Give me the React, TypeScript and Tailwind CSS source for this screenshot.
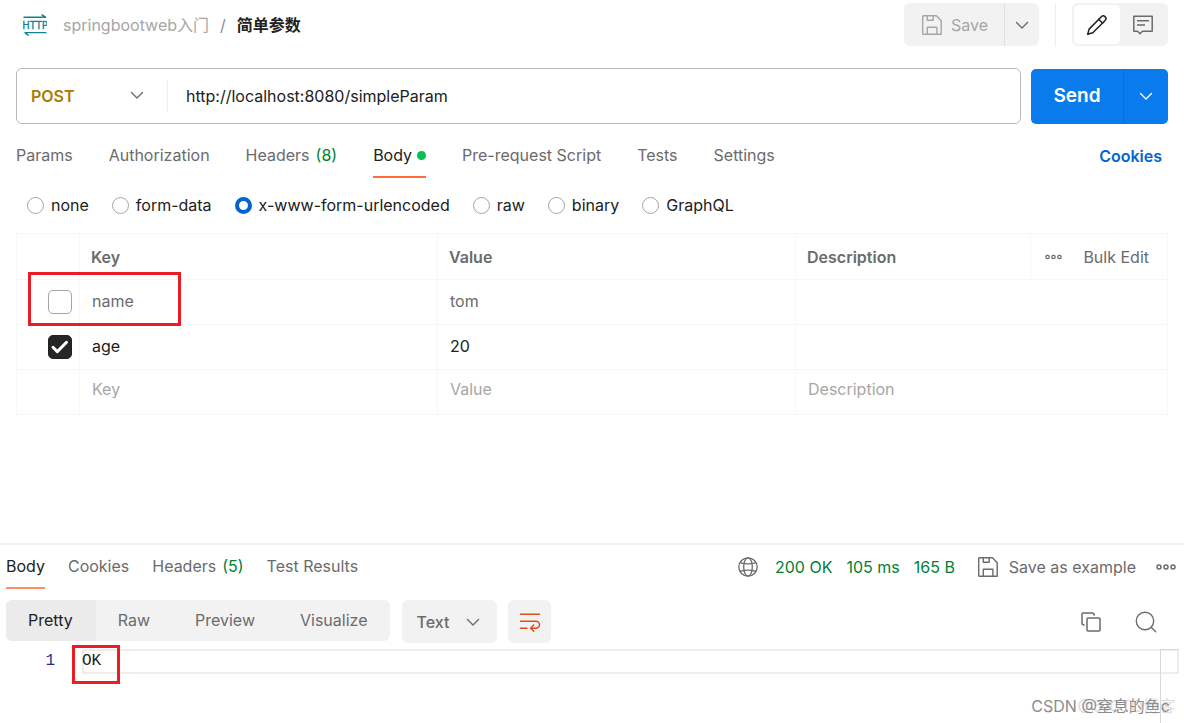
import { useState } from "react";
import type { ReactNode } from "react";

function Chevron({ className }: { className?: string }) {
  return (
    <svg width="14" height="14" viewBox="0 0 14 14" fill="none" stroke="currentColor" strokeWidth="1.4" strokeLinecap="round" strokeLinejoin="round" className={className} aria-hidden="true">
      <path d="M1.5 4.5 7 10l5.5-5.5" />
    </svg>
  );
}

function SaveIcon() {
  return (
    <svg width="20" height="20" viewBox="0 0 20 20" fill="none" stroke="currentColor" strokeWidth="1.4" strokeLinejoin="round" aria-hidden="true">
      <path d="M1.2.8h13.3l4.7 5v13.4h-18a.5.5 0 0 1-.5-.5V1.3a.5.5 0 0 1 .5-.5Z" />
      <path d="M5.3.8V5.3h5.900V.8M5.300 19.200v-7h9.600v7" />
    </svg>
  );
}

function HttpIcon() {
  return (
    <svg width="24" height="22" viewBox="0 0 24 22" aria-hidden="true" className="shrink-0">
      <g fill="none" stroke="#0e8394" strokeWidth="1.4" strokeLinecap="round" strokeLinejoin="round">
        <path d="M1 3.200h21.500L19 .8" />
        <path d="M23 18.600H2l3.200 2.600" />
      </g>
      <text x="12" y="15.300" textAnchor="middle" fill="#0e8394" stroke="#0e8394" strokeWidth=".3" fontSize="11" fontFamily="'Liberation Sans Narrow', 'DejaVu Sans Condensed', sans-serif">
        HTTP
      </text>
    </svg>
  );
}

function DotsIcon({ size, className }: { size: "small" | "large"; className?: string }) {
  return (
    <svg width={size === "small" ? 17 : 20} height="6" viewBox="0 0 20 6" fill="none" stroke="currentColor" strokeWidth="1.500" aria-hidden="true" className={className}>
      <circle cx="3" cy="3" r="2" />
      <circle cx="10" cy="3" r="2" />
      <circle cx="17" cy="3" r="2" />
    </svg>
  );
}

function Tab({ children, active = false, underline = "border-[#ff6c37]" }: { children: ReactNode; active?: boolean; underline?: string }) {
  return (
    <button
      type="button"
      role="tab"
      aria-selected={active}
      className={`flex h-11 items-center border-b-2 whitespace-nowrap ${active ? `${underline} text-[#212121]` : "border-transparent text-[#6b6b6b]"}`}
    >
      {children}
    </button>
  );
}

const bodyTypes = ["none", "form-data", "x-www-form-urlencoded", "raw", "binary", "GraphQL"];

const params = [
  { key: "name", value: "tom", enabled: false },
  { key: "age", value: "20", enabled: true },
];

const cell = "border border-[#f7f7f7]";
const field = "block h-11 w-full bg-transparent px-3 pb-[3px] outline-none placeholder:text-[#a6a6a6]";

function ParamRow({ name, value, initial }: { name: string; value: string; initial: boolean }) {
  const [on, setOn] = useState(initial);
  const color = on ? "text-[#212121]" : "text-[#6b6b6b]";
  return (
    <tr>
      <td className={cell}>
        <div className="relative ml-[31px] size-6">
          <input
            type="checkbox"
            aria-label={`Enable ${name}`}
            checked={on}
            onChange={() => setOn(!on)}
            className="block size-6 appearance-none rounded-[5px] border border-[#a6a6a6] checked:border-[#212121] checked:bg-[#262626]"
          />
          {on && (
            <svg width="24" height="24" viewBox="0 0 24 24" fill="none" stroke="#fff" strokeWidth="3" strokeLinecap="round" strokeLinejoin="round" aria-hidden="true" className="pointer-events-none absolute inset-0">
              <path d="m5 12.300 4.300 4.300L18.500 7.300" />
            </svg>
          )}
        </div>
      </td>
      <td className={cell}>
        <input aria-label="Key" defaultValue={name} className={`${field} ${color}`} />
      </td>
      <td className={cell}>
        <input aria-label="Value" defaultValue={value} className={`${field} ${color}`} />
      </td>
      <td className={cell} colSpan={2}>
        <input aria-label="Description" className={`${field} ${color}`} />
      </td>
    </tr>
  );
}

function Header() {
  return (
    <header className="flex items-start justify-between pt-[3px]">
      <nav aria-label="Breadcrumb" className="flex h-[43px] items-center pl-[7px]">
        <HttpIcon />
        <a href="#collection" className="ml-4 text-[#a6a6a6]">springbootweb入门</a>
        <span className="mx-[11px] text-[#8a8a8a]">/</span>
        <span className="font-bold text-[#212121]">简单参数</span>
      </nav>
      <div className="flex items-center">
        <div className="flex h-[43px] overflow-hidden rounded-md bg-[#f2f2f2]">
          <button type="button" className="flex items-center gap-[9px] border-r border-[#e0e0e0] pr-4 pl-[18px] text-[#a6a6a6]">
            <SaveIcon />
            Save
          </button>
          <button type="button" aria-label="Save options" className="grid w-[34px] place-items-center text-[#6b6b6b]">
            <Chevron />
          </button>
        </div>
        <div className="mx-4 h-[43px] w-px bg-[#ededed]" />
        <div className="flex h-[43px] w-24 rounded-md bg-[#f2f2f2] p-[2px]">
          <button type="button" aria-label="Edit" className="grid flex-1 place-items-center rounded-[5px] bg-white text-[#212121]">
            <svg width="22" height="22" viewBox="0 0 22 22" fill="none" stroke="currentColor" strokeWidth="1.500" strokeLinejoin="round" strokeLinecap="round" aria-hidden="true">
              <path d="m1.700 20.300 1.400-5.200L15.300 2.700a2.600 2.600 0 0 1 3.800 3.700L6.800 18.800l-5.100 1.500Z" />
              <path d="m12.700 5.300 3.900 3.900" />
            </svg>
          </button>
          <button type="button" aria-label="Comments" className="grid flex-1 place-items-center text-[#6b6b6b]">
            <svg width="20" height="20" viewBox="0 0 20 20" fill="none" stroke="currentColor" strokeWidth="1.500" strokeLinejoin="round" aria-hidden="true">
              <path d="M.8 1.200h18.400v15H9.500L7 18.700l-2.500-2.500H.8v-15Z" />
              <path d="M4 5.700h12M4 10h8" />
            </svg>
          </button>
        </div>
      </div>
    </header>
  );
}

function UrlBar() {
  return (
    <div className="mt-[22px] flex h-[56px] items-center gap-[10px]">
      <div className="flex h-full min-w-0 flex-1 items-center rounded-md border border-[#b8b8b8]">
        <div className="relative w-[151px] border-r border-[#ededed]">
          <select aria-label="Method" defaultValue="POST" className="h-8 w-full appearance-none bg-transparent pl-[14px] font-semibold text-[#ad7a03] outline-none">
            <option>GET</option>
            <option>POST</option>
            <option>PUT</option>
          </select>
          <Chevron className="pointer-events-none absolute top-2 right-[23px] text-[#6b6b6b]" />
        </div>
        <input aria-label="Request URL" defaultValue="http://localhost:8080/simpleParam" className="min-w-0 flex-1 px-[18px] text-[#212121] outline-none" />
      </div>
      <div className="flex h-[55px] w-[137px] overflow-hidden rounded-[5px] bg-[#097bed] text-white">
        <button type="button" className="flex-1 border-r border-[#0a6fd6] text-[19px] font-semibold">Send</button>
        <button type="button" aria-label="Send options" className="grid w-11 place-items-center">
          <Chevron />
        </button>
      </div>
    </div>
  );
}

function BodyTypes() {
  return (
    <fieldset aria-label="Body type" className="mt-[15px] flex flex-wrap gap-x-[23px] pl-[11px]">
      {bodyTypes.map((type) => (
        <label key={type} className="flex h-6 items-center gap-[7px]">
          <input
            type="radio"
            name="body-type"
            defaultChecked={type === "x-www-form-urlencoded"}
            className="size-[17px] appearance-none rounded-full border border-[#a6a6a6] checked:border-4 checked:border-[#0265d2]"
          />
          {type}
        </label>
      ))}
    </fieldset>
  );
}

function ParamsTable() {
  return (
    <div className="relative mt-4">
      <table className="w-full table-fixed border-collapse border border-[#f0f0f0] text-left">
        <colgroup>
          <col className="w-[63px]" />
          <col />
          <col />
          <col className="w-[235px]" />
          <col className="w-[137px]" />
        </colgroup>
        <thead>
          <tr className="h-[46px] text-[#6b6b6b]">
            <th className={cell} aria-label="Enabled" />
            <th className={`${cell} px-[11px] font-semibold`}>Key</th>
            <th className={`${cell} px-[11px] font-semibold`}>Value</th>
            <th className={`${cell} px-[11px] font-semibold`}>Description</th>
            <th className={`${cell} font-normal`}>
              <div className="flex items-center justify-between pr-[18px] pl-[14px]">
                <button type="button" aria-label="More options"><DotsIcon size="small" /></button>
                <button type="button">Bulk Edit</button>
              </div>
            </th>
          </tr>
        </thead>
        <tbody>
          {params.map((p) => (
            <ParamRow key={p.key} name={p.key} value={p.value} initial={p.enabled} />
          ))}
          <tr className="[&_input]:pb-[6px]">
            <td className={cell} />
            <td className={cell}><input aria-label="New key" placeholder="Key" className={field} /></td>
            <td className={cell}><input aria-label="New value" placeholder="Value" className={field} /></td>
            <td className={cell} colSpan={2}><input aria-label="New description" placeholder="Description" className={field} /></td>
          </tr>
        </tbody>
      </table>
      <div className="pointer-events-none absolute top-[39px] left-3 h-[54px] w-[153px] border-[3px] border-[#ec1c24]" />
    </div>
  );
}

function ResponsePanel() {
  return (
    <section aria-label="Response" className="relative mt-32 flex flex-1 flex-col border-t-2 border-[#f2f2f2]">
      <div className="flex items-center justify-between pr-2 pl-[6px]">
        <div role="tablist" className="flex gap-[23px]">
          <Tab active underline="border-[#ff8e62]">Body</Tab>
          <Tab>Cookies</Tab>
          <Tab>Headers <span className="ml-[6px] text-[#007f31]">(5)</span></Tab>
          <Tab>Test Results</Tab>
        </div>
        <div className="flex items-center text-[#6b6b6b]">
          <svg width="20" height="20" viewBox="0 0 20 20" fill="none" stroke="currentColor" strokeWidth="1.300" aria-hidden="true">
            <circle cx="10" cy="10" r="9.200" />
            <ellipse cx="10" cy="10" rx="4.300" ry="9.200" />
            <path d="M2 5.600c4.500 1.500 11.500 1.500 16 0M2 14.400c4.500-1.500 11.500-1.500 16 0" />
          </svg>
          <div className="ml-[17px] flex gap-[14px] text-[#007f31]">
            <span>200 OK</span>
            <span>105 ms</span>
            <span>165 B</span>
          </div>
          <button type="button" className="ml-[23px] flex items-center gap-[11px]">
            <SaveIcon />
            Save as example
          </button>
          <button type="button" aria-label="More actions" className="ml-5"><DotsIcon size="large" /></button>
        </div>
      </div>

      <div className="mt-[11px] flex items-start pl-[6px]">
        <div className="flex h-[41px] overflow-hidden rounded-md bg-[#f2f2f2] text-[#6b6b6b]">
          <button type="button" className="bg-[#ebebeb] pr-[23px] pb-[2px] pl-[22px] text-[#212121]">Pretty</button>
          <button type="button" className="pr-[23px] pb-[2px] pl-[22px]">Raw</button>
          <button type="button" className="pr-[23px] pb-[2px] pl-[22px]">Preview</button>
          <button type="button" className="pr-[23px] pb-[2px] pl-[22px]">Visualize</button>
        </div>
        <div className="relative ml-3 w-[95px]">
          <select aria-label="Response format" defaultValue="Text" className="h-[43px] w-full appearance-none rounded-md bg-[#f2f2f2] pl-[14px] font-medium text-[#6b6b6b] outline-none">
            <option>Text</option>
            <option>JSON</option>
          </select>
          <Chevron className="pointer-events-none absolute top-[15px] right-[17px] text-[#6b6b6b]" />
        </div>
        <button type="button" aria-label="Wrap lines" className="ml-[11px] grid size-[43px] place-items-center rounded-md bg-[#f2f2f2] text-[#d8501e]">
          <svg width="22" height="20" viewBox="0 0 22 20" fill="none" stroke="currentColor" strokeWidth="1.500" strokeLinecap="round" strokeLinejoin="round" aria-hidden="true">
            <path d="M1.500 2.200h19M1.500 9.200H17a3.500 3.500 0 0 1 0 7h-5M1.500 16.200H8M14.700 13l-3.100 3.200 3.100 3" />
          </svg>
        </button>
        <div className="mr-[27px] ml-auto flex h-[43px] items-center gap-[34px] text-[#6b6b6b]">
          <button type="button" aria-label="Copy">
            <svg width="20" height="20" viewBox="0 0 20 20" fill="none" stroke="currentColor" strokeWidth="1.500" strokeLinejoin="round" strokeLinecap="round" aria-hidden="true">
              <rect x="6" y="6" width="13" height="13" rx="1" />
              <path d="M3 13.200 1 12V2a1 1 0 0 1 1-1h10l1.300 2" />
            </svg>
          </button>
          <button type="button" aria-label="Search">
            <svg width="22" height="22" viewBox="0 0 22 22" fill="none" stroke="currentColor" strokeWidth="1.400" strokeLinecap="round" aria-hidden="true">
              <circle cx="10" cy="10" r="8.700" />
              <path d="m16.200 16.200 4.500 4.500" />
            </svg>
          </button>
        </div>
      </div>

      <div className="mt-[6px] flex flex-1 pr-[5px] font-['Liberation_Mono',monospace] leading-[25px]">
        <span className="w-[55px] text-right text-[#1f2f8f]">1</span>
        <div className="relative ml-[27px] flex flex-1">
          <code className="h-[25px] flex-1 font-['Liberation_Mono',monospace] text-[#212121] inset-ring-2 inset-ring-[#ededed]">OK</code>
          <div className="pointer-events-none absolute top-[-4px] left-[-10px] h-[39px] w-12 border-[3px] border-[#ec1c24]" />
          <div className="absolute inset-y-0 right-0 w-[19px] border-t border-l border-[#d9d9d9]" />
        </div>
      </div>

      <p className="pointer-events-none absolute right-[9px] bottom-[5px] text-[#dcdcdc]">@51CTO博客</p>
      <p className="pointer-events-none absolute right-[14px] bottom-[5px] text-[#8c8c8c]">CSDN @窒息的鱼c</p>
    </section>
  );
}

export default function App() {
  return (
    <main className="flex min-h-screen flex-col bg-white font-['Inter','Noto_Sans_CJK_SC',sans-serif] text-base text-[#212121]">
      <section aria-label="Request" className="px-4">
        <Header />
        <UrlBar />
        <div className="mt-[10px] flex items-center justify-between">
          <div role="tablist" className="flex gap-9">
            <Tab>Params</Tab>
            <Tab>Authorization</Tab>
            <Tab>Headers <span className="ml-[6px] text-[#007f31]">(8)</span></Tab>
            <Tab active>Body <span className="ml-[5px] size-[9px] rounded-full bg-[#0cbb52]" /></Tab>
            <Tab>Pre-request Script</Tab>
            <Tab>Tests</Tab>
            <Tab>Settings</Tab>
          </div>
          <a href="#cookies" className="pr-[6px] font-semibold text-[#0265d2]">Cookies</a>
        </div>
        <BodyTypes />
        <ParamsTable />
      </section>
      <ResponsePanel />
    </main>
  );
}
